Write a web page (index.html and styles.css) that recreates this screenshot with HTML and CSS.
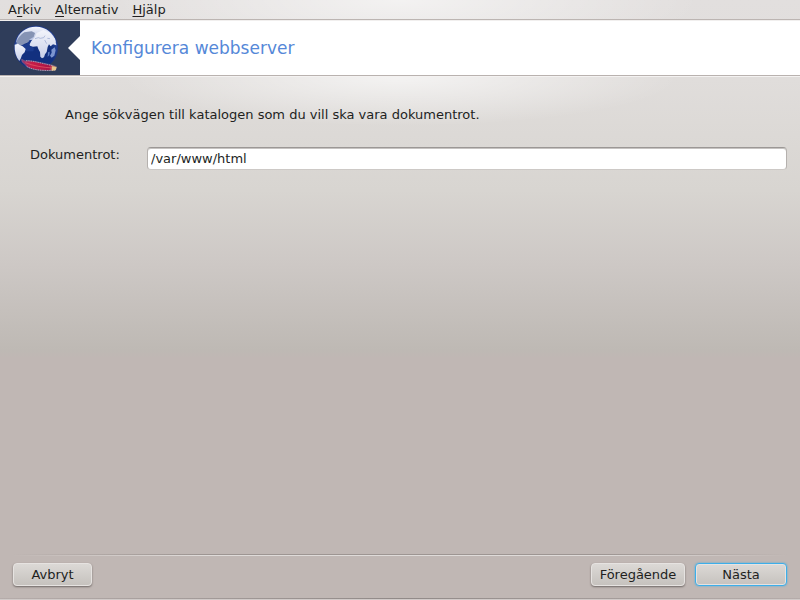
FILE: index.html
```
<!DOCTYPE html>
<html lang="sv">
	<head>
		<meta charset="UTF-8" />
		<meta name="viewport" content="width=device-width, initial-scale=1.0" />
		<title>Konfigurera webbserver</title>
		<link rel="stylesheet" href="styles.css">
	</head>
	<body>
		<nav class="menubar">
			<a href="#arkiv">A<u>r</u>kiv</a>
			<a href="#alternativ"><u>A</u>lternativ</a>
			<a href="#hjalp"><u>H</u>jälp</a>
		</nav>

		<header class="banner">
			<svg class="banner-icon" viewBox="0 9 240 162" aria-hidden="true">
				<defs>
					<radialGradient id="sea" cx="0.5" cy="0.7" r="0.65">
						<stop offset="0" stop-color="#12307f" />
						<stop offset="0.6" stop-color="#12307f" />
						<stop offset="1" stop-color="#3555a8" />
					</radialGradient>
					<linearGradient id="shine" x1="0" y1="0" x2="0" y2="1">
						<stop offset="0" stop-color="#f4f6fd" />
						<stop offset="1" stop-color="#a9b6dc" />
					</linearGradient>
					<linearGradient id="land" x1="0" y1="0" x2="0" y2="1">
						<stop offset="0" stop-color="#f2f4fb" />
						<stop offset="1" stop-color="#c9d0e8" />
					</linearGradient>
					<linearGradient id="feather" x1="0" y1="0" x2="1" y2="0">
						<stop offset="0" stop-color="#8c3a78" />
						<stop offset="0.3" stop-color="#c81c48" />
						<stop offset="0.8" stop-color="#a81446" />
						<stop offset="1" stop-color="#e8c070" />
					</linearGradient>
				</defs>
				<rect y="9" width="240" height="162" fill="#2f3d5a" />
				<circle cx="108" cy="89" r="65" fill="url(#sea)" stroke="#1c3580" stroke-width="2" />
				<path d="M48 72c6-28 30-46 60-46 30 0 54 20 60 46-20-6-40-8-62-6-22 1-40 4-58 6z" fill="url(#shine)" />
				<!-- Americas -->
				<path d="M49 72c6-14 14-22 24-29l22-3 10 5-4 12-12 7-3 9-14 5-6 8-9-3-6 3z" fill="#8593b4" />
				<path d="M80 77l10-10 12 1-8 7 2 8 6 9-2 8H78l-9-11-6-7z" fill="#1c3c8e" />
				<path d="M44 80l10-3 6 5 8 3 9 8-3 10-8 8-4 11-4 7c-10-12-15-28-14-49z" fill="url(#land)" />
				<!-- Europe and Africa -->
				<path d="M89 79l5-10 10-11 6-13 20-9 20 8 15 18 4 20-10-3-7 6-5-6-4 8-3 15-5 7-3 9-6 3-5-5-1-14-5-9-3-8-13 1-9-3z" fill="url(#land)" />
				<path d="M105 62l10-3 6 2 10-2 4-6M134 66l6 11M142 61l8 1" fill="none" stroke="#94a3cd" stroke-width="2" />
				<path d="M144 103l5-2-1 11-5 4z" fill="#5d7cc0" />
				<path d="M154 95l10-7 3 9-4 16-8 6-5-6 5-9z" fill="#7c95cf" />
				<!-- feather -->
				<path d="M65 124l10 5c14-2 30 2 46 5 17 4 36 6 48 12l-2 10c-17 2-36 2-52 0-18-3-32-5-38-15l-11-10z" fill="url(#feather)" stroke="#77678e" stroke-width="2" />
				<path d="M78 128c26 0 52 10 80 15M80 145c20 12 48 13 84 12" fill="none" stroke="#c9bfcb" stroke-width="2" stroke-dasharray="4 3" />
				<path d="M76 134c26 10 50 14 83 16" fill="none" stroke="#e8606a" stroke-width="2" />
				<path d="M156 145l14 3-3 9-12 1z" fill="#e5c68c" />
				<path d="M240 54l-36 36 36 36z" fill="#fff" />
			</svg>
			<h1>Konfigurera webbserver</h1>
		</header>

		<form class="wizard">
			<main class="content">
				<p class="intro">Ange sökvägen till katalogen som du vill ska vara dokumentrot.</p>
				<div class="field">
					<label for="docroot">Dokumentrot:</label>
					<input type="text" id="docroot" value="/var/www/html" />
				</div>
			</main>

			<footer class="actions">
				<button type="button" class="cancel">Avbryt</button>
				<button type="button" class="previous">Föregående</button>
				<button type="submit" class="next">Nästa</button>
			</footer>
		</form>
	</body>
</html>
```

FILE: styles.css
```
* {
	box-sizing: border-box;
}

body {
	display: flex;
	flex-direction: column;
	min-height: 100vh;
	margin: 0;
	font: 13px/16px 'DejaVu Sans', sans-serif;
	color: #221f1e;
	background: #c0b7b4 linear-gradient(#e2dfde 0, #e0dddb 80px, #d8d5d1 190px, #cdc8c5 265px, #beb9b4 350px, #c0b7b4 358px) no-repeat;
}

.menubar {
	display: flex;
	gap: 14px;
	height: 21px;
	padding: 2px 8px 0;
	background: radial-gradient(ellipse 300px 64px at 50% 0, rgba(255, 255, 255, 0.6), rgba(255, 255, 255, 0));
	border-bottom: 1px solid #f1efee;
	box-shadow: inset 0 -1px #bcb5b2;
}

.menubar a {
	color: inherit;
	text-decoration: none;
}

.menubar u {
	text-underline-offset: 2px;
}

.banner {
	display: flex;
	align-items: center;
	gap: 11px;
	background: #fff;
	border-bottom: 1px solid #b9b2af;
}

.banner-icon {
	display: block;
	width: 80px;
	height: 54px;
}

.banner h1 {
	margin: 0;
	font-size: 17px;
	font-weight: normal;
	line-height: 20px;
	color: #5588d8;
}

.wizard {
	display: flex;
	flex: 1;
	flex-direction: column;
	background: radial-gradient(ellipse 280px 50px at 50% 0, rgba(255, 255, 255, 0.65), rgba(255, 255, 255, 0));
	box-shadow: inset 0 1px #f4f2f1;
}

.content {
	flex: 1;
	padding: 31px 13px 16px 30px;
}

.intro {
	margin: 0 0 24px 35px;
}

.field {
	display: flex;
	align-items: flex-start;
}

.field label {
	width: 117px;
}

.field input {
	flex: 1;
	min-width: 0;
	height: 23px;
	padding: 0 3px;
	font: inherit;
	color: inherit;
	background: #fff;
	border: 1px solid #b5b1ae;
	border-top-color: #9b9795;
	border-bottom-color: #cdc9c6;
	border-radius: 4px;
	box-shadow: inset 0 1px #c6c3c1;
	outline: none;
}

.actions {
	display: flex;
	gap: 10px;
	padding: 9px 13px 14px;
	background:
		linear-gradient(90deg, transparent 12px, #9d9592 25%, #9d9592 75%, transparent calc(100% - 12px)) top / 100% 1px,
		linear-gradient(90deg, transparent 12px, #dfdbd9 25%, #dfdbd9 75%, transparent calc(100% - 12px)) 0 1px / 100% 1px,
		linear-gradient(90deg, #b5acaa, #918a88 50%, #b5acaa) 0 calc(100% - 1px) / 100% 1px,
		linear-gradient(#d0cac8, #d0cac8) bottom / 100% 1px;
	background-repeat: no-repeat;
}

.actions button {
	height: 23px;
	padding: 0;
	font: inherit;
	color: inherit;
	background: linear-gradient(#dcd9d6, #c6c2be);
	border: 1px solid #e6e3e1;
	border-radius: 4px;
	box-shadow: 0 1px 2px #6f6866;
}

.actions .cancel {
	width: 79px;
	margin-right: auto;
}

.actions .previous {
	width: 94px;
}

.actions .next {
	width: 92px;
	border-color: #3daee9;
	box-shadow: inset 0 0 0 1px #e6e3e1, 0 0 2px #3daee9;
}
```
